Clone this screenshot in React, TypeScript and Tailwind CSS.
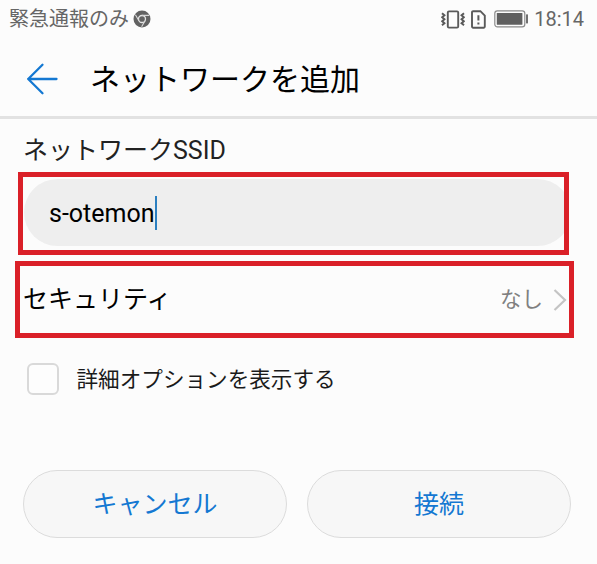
import React, { useState } from 'react';

const BatteryIcon: React.FC = () => (
    <svg width="35" height="18" viewBox="0 0 35 18" fill="none">
        <rect x="0.8" y="0.9" width="30" height="16" rx="2.6" stroke="#8a8a8a" strokeWidth="1.2" />
        <rect x="2.8" y="3" width="25.6" height="11.8" rx="0.6" fill="#606060" />
        <rect x="32" y="4.4" width="2" height="9" fill="#707070" />
    </svg>
);

const VibrateIcon: React.FC = () => (
    <svg width="24" height="19" viewBox="0 0 24 19" fill="none" stroke="#5a5a5a">
        <rect x="6.8" y="1.4" width="10.4" height="16.2" rx="1.2" strokeWidth="1.9" />
        <path d="M1 3.2l2.4 2-2.2 2 2.2 2-2.2 2 2.2 2-2.4 2" strokeWidth="2" />
        <path d="M23 3.2l-2.4 2 2.2 2-2.2 2 2.2 2-2.2 2 2.4 2" strokeWidth="2" />
    </svg>
);

const SimAlertIcon: React.FC = () => (
    <svg width="15" height="19" viewBox="0 0 15 19" fill="none" stroke="#5a5a5a">
        <path d="M2.1 1.2h7.3l4.4 4.4v11a1.1 1.1 0 0 1-1.1 1.1H2.1A1.1 1.1 0 0 1 1 16.6V2.3a1.1 1.1 0 0 1 1.1-1.1z" strokeWidth="1.9" />
        <path d="M7.4 5.2v5.3M7.4 12.4v2.2" strokeWidth="2" />
    </svg>
);

const ChromeIcon: React.FC = () => (
    <svg width="18" height="18" viewBox="0 0 18 18" fill="none">
        <circle cx="9" cy="9" r="8.5" fill="#626262" />
        <circle cx="9" cy="9" r="3.5" stroke="#e4e4e4" strokeWidth="1.3" />
        <path d="M9 5.4h7.2M5.9 10.8L2.4 4.8M12.1 10.8L8.6 16.8" stroke="#d8d8d8" strokeWidth="1.1" />
    </svg>
);

const StatusBar: React.FC = () => (
    <div className="flex h-[38px] items-center justify-between pl-[9px] pr-[13px] text-[#666]">
        <div className="flex items-center gap-[4px]">
            <span className="text-[20px] leading-none">緊急通報のみ</span>
            <ChromeIcon />
        </div>
        <div className="flex items-center">
            <VibrateIcon />
            <div className="ml-[6px]"><SimAlertIcon /></div>
            <div className="ml-[8px]"><BatteryIcon /></div>
            <span className="ml-[5px] text-[20px] leading-none">18:14</span>
        </div>
    </div>
);

const App: React.FC = () => {
    const [ssid] = useState('s-otemon');
    const [showAdvanced, setShowAdvanced] = useState(false);

    return (
        <div className="h-[564px] w-[597px] overflow-hidden bg-[#fcfcfc] font-[Roboto,'Noto_Sans_CJK_JP',sans-serif] text-black">
            <StatusBar />

            {/* Title bar */}
            <header className="flex h-[81px] items-center border-b-3 border-[#e2e2e2] pt-[3px] pl-[26px]">
                <svg width="33" height="32" viewBox="0 0 33 32" fill="none" stroke="#1478d2" strokeWidth="2.3" strokeLinecap="round" strokeLinejoin="round">
                    <path d="M30.5 16H2.2M16.5 1.8L2.2 16l14.3 14.2" />
                </svg>
                <h1 className="ml-[31px] pt-[2px] text-[30px] leading-none">ネットワークを追加</h1>
            </header>

            <main>
                <div className="flex h-[53px] items-center pl-[23px] pt-[10px] text-[25px] leading-none text-[#222]">
                    ネットワークSSID
                </div>

                {/* SSID field */}
                <div className="ml-[18px] h-[83px] w-[551px] overflow-hidden border-5 border-[#da2028] bg-[#fcfcfc]">
                    <div className="mt-[2px] ml-px flex h-[67px] w-[547px] items-center rounded-full bg-[#eee] pl-[25px]">
                        <span className="pt-[2px] text-[25px] leading-none">{ssid}</span>
                        <span className="h-[34px] w-[2px] bg-[#2b7fc0]" />
                    </div>
                </div>

                {/* Security row */}
                <div className="mt-[6px] ml-[15px] flex h-[77px] w-[559px] items-center justify-between border-5 border-[#da2028] pl-[3px] pr-[2px]">
                    <span className="text-[25px] leading-none">セキュリティ</span>
                    <div className="flex items-center text-[#808080]">
                        <span className="text-[21.5px] leading-none">なし</span>
                        <svg className="ml-[10px]" width="14" height="22" viewBox="0 0 14 22" fill="none" stroke="#c4c4c4" strokeWidth="2.2">
                            <path d="M1.5 1l10.5 10-10.5 10" />
                        </svg>
                    </div>
                </div>

                <label className="mt-[25px] ml-[27px] flex h-[32px] items-center gap-[17.5px]">
                    <input
                        type="checkbox"
                        checked={showAdvanced}
                        onChange={() => setShowAdvanced(!showAdvanced)}
                        className="size-[32px] appearance-none rounded-[6px] border-2 border-[#d9d9d9] bg-[#fdfdfd]"
                    />
                    <span className="pt-[2px] text-[21.6px] leading-none text-[#1a1a1a]">詳細オプションを表示する</span>
                </label>
            </main>

            <footer className="mt-[75px] flex gap-[20px] pl-[23px] text-[25px] leading-none text-[#1478d2]">
                <button className="h-[68px] w-[264px] rounded-full border border-[#dcdcdc] bg-[#f7f7f7]">キャンセル</button>
                <button className="h-[68px] w-[264px] rounded-full border border-[#dcdcdc] bg-[#f7f7f7]">接続</button>
            </footer>
        </div>
    );
};

export default App;
